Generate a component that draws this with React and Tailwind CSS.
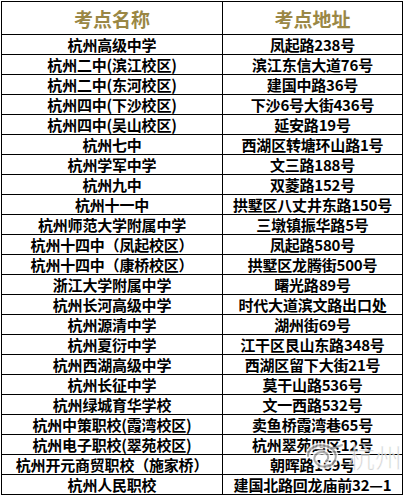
import React from "react";

const rows = [
  ["杭州高级中学", "凤起路238号"],
  ["杭州二中(滨江校区)", "滨江东信大道76号"],
  ["杭州二中(东河校区)", "建国中路36号"],
  ["杭州四中(下沙校区)", "下沙6号大街436号"],
  ["杭州四中(吴山校区)", "延安路19号"],
  ["杭州七中", "西湖区转塘环山路1号"],
  ["杭州学军中学", "文三路188号"],
  ["杭州九中", "双菱路152号"],
  ["杭州十一中", "拱墅区八丈井东路150号"],
  ["杭州师范大学附属中学", "三墩镇振华路5号"],
  ["杭州十四中（凤起校区）", "凤起路580号"],
  ["杭州十四中（康桥校区）", "拱墅区龙腾街500号"],
  ["浙江大学附属中学", "曙光路89号"],
  ["杭州长河高级中学", "时代大道滨文路出口处"],
  ["杭州源清中学", "湖州街69号"],
  ["杭州夏衍中学", "江干区艮山东路348号"],
  ["杭州西湖高级中学", "西湖区留下大街21号"],
  ["杭州长征中学", "莫干山路536号"],
  ["杭州绿城育华学校", "文一西路532号"],
  ["杭州中策职校(霞湾校区)", "卖鱼桥霞湾巷65号"],
  ["杭州电子职校(翠苑校区)", "杭州翠苑四区12号"],
  ["杭州开元商贸职校（施家桥）", "朝晖路169号"],
  ["杭州人民职校", "建国北路回龙庙前32—1"],
];

const font = {
  fontFamily: '"Noto Sans CJK SC", "Noto Sans", sans-serif',
};

export default function App() {
  return (
    <div className="w-[405px] h-[496px] bg-white relative overflow-hidden" style={font}>
      <div className="ml-[1px] mt-[1px] w-[402px] border-l border-t border-black grid grid-cols-[221px_180px]">
        <div className="h-[33px] border-r border-b border-black flex items-center justify-center text-[19px] font-bold text-[#9a8745] leading-none">
          考点名称
        </div>
        <div className="h-[33px] border-r border-b border-black flex items-center justify-center text-[19px] font-bold text-[#9a8745] leading-none">
          考点地址
        </div>
        {rows.map(([a, b], i) => (
          <React.Fragment key={i}>
            <div className="h-[20px] border-r border-b border-black flex items-center justify-center text-[15px] font-bold text-black leading-none whitespace-nowrap tracking-[-0.2px]">
              {a}
            </div>
            <div className="h-[20px] border-r border-b border-black flex items-center justify-center text-[15px] font-bold text-black leading-none whitespace-nowrap tracking-[-0.2px]">
              {b}
            </div>
          </React.Fragment>
        ))}
      </div>
      <div className="absolute left-[302px] top-[441px] flex items-center gap-[2px] pointer-events-none opacity-80">
        <svg width="44" height="30" viewBox="0 0 44 30">
          <path d="M6 15 C6 6 16 3 24 5 C33 7 36 15 32 21 C28 27 18 27 14 22 C10 17 14 11 20 11 C26 11 28 17 24 20" fill="none" stroke="#ffffff" strokeWidth="5" strokeLinecap="round" />
          <path d="M6 15 C6 6 16 3 24 5 C33 7 36 15 32 21 C28 27 18 27 14 22 C10 17 14 11 20 11 C26 11 28 17 24 20" fill="none" stroke="#9a9a9a" strokeWidth="2" strokeLinecap="round" />
          <path d="M30 8 L40 4" stroke="#9a9a9a" strokeWidth="2" strokeLinecap="round" />
        </svg>
        <span className="text-[27px] leading-none text-[#b5b5b5] font-light" style={{ WebkitTextStroke: "0.5px #ffffff" }}>
          杭州
        </span>
      </div>
    </div>
  );
}
